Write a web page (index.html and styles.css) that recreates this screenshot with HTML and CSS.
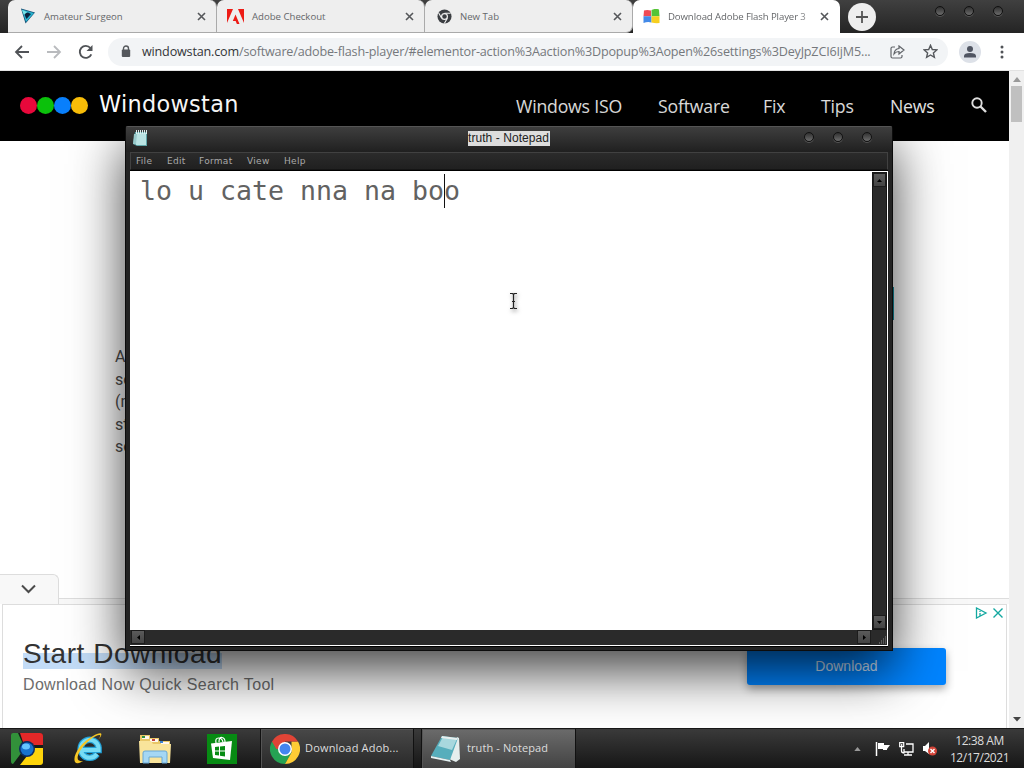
FILE: index.html
```html
<!DOCTYPE html>
<html lang="en">
<head>
<meta charset="utf-8">
<title>Desktop</title>
<link rel="stylesheet" href="styles.css">
</head>
<body>
<div class="desktop">
  <header class="tabs">
    <div class="tab t1">
      <svg width="16" height="16" viewBox="0 0 16 16"><path d="M1 .5 15 4.5 5.5 15.5z" fill="#124a70"/><path d="M1.800 1.500 14 5 6 14z" fill="#28b4cf"/><path d="M4 5.500 8 4.500 11 6 6.500 11z" fill="#08233f"/><path d="m2 2 5 2-3 3z" fill="#78e2e5"/></svg>
      <span class="label">Amateur Surgeon</span><svg class="x" width="9" height="9" viewBox="0 0 9 9"><path d="m1 1 7 7m0-7-7 7"/></svg>
    </div>
    <div class="tab t2">
      <svg width="17" height="15" viewBox="0 0 17 15"><path d="M0 0h6L0 14zm11 0h6v14zM8.500 5.500l4 9.500h-2.600l-1.300-3H5.800z" fill="#ed1c16"/></svg>
      <span class="label">Adobe Checkout</span><svg class="x" width="9" height="9" viewBox="0 0 9 9"><path d="m1 1 7 7m0-7-7 7"/></svg>
    </div>
    <div class="tab t3">
      <svg width="15" height="15" viewBox="0 0 16 16"><circle cx="8" cy="8" r="7.5" fill="#3b3e42"/><circle cx="8" cy="8" r="3.1" fill="#3b3e42" stroke="#eee" stroke-width="1.3"/><path d="M8 4.5h6.5M5 9.800 1.800 4.200M11 9.800 7.800 15.400" stroke="#eee" stroke-width="1.2"/></svg>
      <span class="label">New Tab</span><svg class="x" width="9" height="9" viewBox="0 0 9 9"><path d="m1 1 7 7m0-7-7 7"/></svg>
    </div>
    <div class="tab t4">
      <svg width="17" height="15" viewBox="0 0 17 15"><path d="M1 1.500q3-1 7 0v5.800H.500z" fill="#ef4b56"/><path d="M8.500 1q4-2 7.500-.5L16.500 7.300h-8z" fill="#54c436"/><path d="M.500 7.300h8v6.200q-4-1-8 .5z" fill="#438ae8"/><path d="M8.500 7.300h8V14q-4 .5-8-.500z" fill="#f6cf20"/></svg>
      <span class="label fade">Download Adobe Flash Player 3</span><svg class="x" width="9" height="9" viewBox="0 0 9 9"><path d="m1 1 7 7m0-7-7 7"/></svg>
    </div>
    <div class="plus"><svg width="14" height="14" viewBox="0 0 14 14"><path d="M7 1v12M1 7h12" stroke="#555" stroke-width="1.800"/></svg></div>
    <div class="knobs chrome-knobs"><i></i><i></i><i></i></div>
  </header>

  <div class="toolbar">
    <svg class="back" width="16" height="14" viewBox="0 0 16 14"><path d="M15 7H2m6-6L2 7l6 6" fill="none" stroke="#505357" stroke-width="1.800"/></svg>
    <svg class="fwd" width="16" height="14" viewBox="0 0 16 14"><path d="M1 7h13M8 1l6 6-6 6" fill="none" stroke="#b9bbbe" stroke-width="1.800"/></svg>
    <svg class="reload" width="16" height="16" viewBox="0 0 16 16"><path d="M13.300 10.300A6 6 0 1 1 12.400 4" fill="none" stroke="#505357" stroke-width="1.900"/><path d="M14.500 1v6h-6z" fill="#505357"/></svg>
    <div class="omni">
      <svg width="10" height="13" viewBox="0 0 10 13"><path d="M2.500 5V3.500a2.500 2.500 0 0 1 5 0V5" fill="none" stroke="#55585c" stroke-width="1.400"/><rect x=".8" y="4.500" width="8.400" height="7.500" rx="1" fill="#55585c"/></svg>
      <span class="url"><b>windowstan.com</b>/software/adobe-flash-player/#elementor-action%3Aaction%3Dpopup%3Aopen%26settings%3DeyJpZCI6IjM5...</span>
      <svg class="share" width="16" height="14" viewBox="0 0 16 14"><path d="M5 2H2.500Q1 2 1 3.500v8Q1 13 2.500 13h8q1.500 0 1.500-1.500V10M9 1l5 4-5 4V6.500Q6 6.500 4 9q.5-5 5-5.500z" fill="none" stroke="#606368" stroke-width="1.200"/></svg>
      <svg class="star" width="15" height="15" viewBox="0 0 15 15"><path d="m7.500 1.300 1.800 4.200 4.500.4-3.400 3 1 4.500-3.900-2.400-3.900 2.400 1-4.500-3.400-3 4.500-.4z" fill="none" stroke="#55585c" stroke-width="1.400"/></svg>
    </div>
    <div class="avatar"><svg width="14" height="14" viewBox="0 0 14 14"><circle cx="7" cy="4" r="3" fill="#505562"/><path d="M1 12.500V11q0-3 6-3t6 3v1.500z" fill="#505562"/></svg></div>
    <svg class="dots" width="4" height="14" viewBox="0 0 4 14"><circle cx="2" cy="2" r="1.500"/><circle cx="2" cy="7" r="1.500"/><circle cx="2" cy="12" r="1.500"/></svg>
  </div>

  <div class="view">
    <main class="page">
      <div class="site">
        <div class="balls"><i class="red"></i><i class="green"></i><i class="blue"></i><i class="gold"></i></div>
        <span class="brand">Windowstan</span>
        <nav><span class="n1">Windows ISO</span><span class="n2">Software</span><span class="n3">Fix</span><span class="n4">Tips</span><span class="n5">News</span></nav>
        <svg width="16" height="16" viewBox="0 0 16 16"><circle cx="6" cy="6" r="4.700" fill="none" stroke="#ddd" stroke-width="1.900"/><path d="m9.500 9.500 5.500 5.500" stroke="#ddd" stroke-width="2.400"/></svg>
      </div>
      <div class="article"><div class="teal"></div><p>A<br>so<br>(n<br>st<br>so</p></div>
      <div class="adtab"><div class="handle"><svg width="15" height="10" viewBox="0 0 15 10"><path d="m1 1.500 6.500 6.500L14 1.500" fill="none" stroke="#4b4b4b" stroke-width="2"/></svg></div><div class="rail"></div></div>
      <section class="ad">
        <div class="copy"><div><span class="start">Start Download</span></div><div class="quick">Download Now Quick Search Tool</div></div>
        <div class="cta">Download</div>
        <svg class="choice" width="28" height="12" viewBox="0 0 28 12"><path d="M1.500 1v10L11 6zM5 4v1m0 1v3" fill="none" stroke="#13a8a0" stroke-width="1.300"/><path d="m18.500 1.500 9 9m0-9-9 9" stroke="#13a8a0" stroke-width="1.400"/></svg>
      </section>
    </main>
    <div class="pagebar"><svg width="8" height="5"><path d="M0 5 4 0l4 5z" fill="#999"/></svg><div class="thumb"></div><svg class="down" width="8" height="5"><path d="m0 0 4 4.500L8 0z" fill="#444"/></svg></div>
  </div>

  <footer class="taskbar">
    <svg class="oldchrome" width="34" height="34" viewBox="0 0 34 34"><rect x="1" y="1" width="32" height="32" rx="3" fill="#151b18"/><path d="M1 3q0-2 2-2l5 0 4 9q-3 5 0 10L3 32q-2 0-2-3z" fill="#32913a"/><path d="M10 1h20q3 0 3 3v9H23q-3-5-10-3z" fill="#e32828"/><path d="M24 16h9v14q0 3-3 3H10l7-9q6 0 7-8z" fill="#fdd40b"/><circle cx="17" cy="17" r="8" fill="#0d2d62"/><circle cx="17" cy="17" r="6.500" fill="#1672cd"/><ellipse cx="16" cy="14.500" rx="4" ry="3" fill="#65c6ff"/></svg>
    <svg class="ie" width="34" height="34" viewBox="0 0 34 34"><path d="M25 22a9 9 0 1 1 1.600-6.200v2.300H10.500" fill="none" stroke="#22a0d6" stroke-width="6.500"/><path d="M25 22a9 9 0 1 1 1.600-6.200v2.300H10.500" fill="none" stroke="#77dcf5" stroke-width="4"/><path d="M26 8C33 0 28 0 21 4 9 10 0 24 3 30q2 3 8-1C5 30 4 26 8 19 14 9 25 2 28 3q1 1-2 5z" fill="#f6c624"/></svg>
    <svg class="explorer" width="34" height="32" viewBox="0 0 34 32"><path d="M2 5V2h10v3h9v3h11v22H2z" fill="#e9c768"/><path d="M4 3h7v3H4zm8 3h8v3h-8zm11 3h8v3h-8z" fill="#fff8ef"/><path d="M4 3h3v2H4z" fill="#31903e"/><path d="M14 6h3v2h-3z" fill="#c4443b"/><path d="M22 8h3v2h-3z" fill="#3a80ce"/><path d="M1 8h12l2 3h18l-1 19H2z" fill="#f9e49b"/><path d="M5 30V20q0-2 2-2h20q2 0 2 2v10h-5v-6H11v6z" fill="#a5d7f4" stroke="#68a8d5"/></svg>
    <svg class="store" width="30" height="30" viewBox="0 0 30 30"><path d="M0 0h30v30H0z" fill="#078b13"/><path d="M4 9.500 25 7l-2 19L6 24z" fill="#fff"/><path d="M9 9q-1-5 2.500-5T16 8M12 8q0-5 3-4.500T18 8" fill="none" stroke="#fff" stroke-width="1.200"/><path d="m8 13 4-.5v4H8zm5-.6 5-.5v4.600h-5zM8 17.500h4v4l-4-.5zm5 0h5v5l-5-.7z" fill="#078b13"/></svg>
    <div class="task chrome-task">
      <svg width="30" height="30" viewBox="0 0 30 30"><path d="M2 7.500A15 15 0 0 0 15 30l6.500-11.500L15 15z" fill="#25a353"/><path d="M28 7.500A15 15 0 0 1 15 30l6.500-11.500V7.500z" fill="#fecc35"/><path d="M2 7.500A15 15 0 0 1 28 7.500H15v7.500H6.300z" fill="#e04436"/><circle cx="15" cy="15" r="7" fill="#fff"/><circle cx="15" cy="15" r="5.500" fill="#4385ef"/></svg><span>Download Adob...</span>
    </div>
    <div class="task note-task">
      <svg width="32" height="30" viewBox="0 0 32 30"><path d="m27 3 2 1 1 21-4 3-7-3z" fill="#e5eeed"/><path d="M12 2 28 4 20 26 1 22z" fill="#56aebc"/><path d="m13 3 14 2-5 11L8 12z" fill="#a8d8de"/><path d="M12 2 28 4l-1 2-16-2z" fill="#e7eeee"/><path d="m1 22 19 4 1 2-20-4z" fill="#e4f2f3"/></svg><span>truth - Notepad</span>
    </div>
    <div class="tray">
      <svg class="up" width="7" height="4" viewBox="0 0 8 5"><path d="M0 5 4 0l4 5z" fill="#999"/></svg>
      <svg class="flag" width="15" height="15" viewBox="0 0 15 15"><path d="M1.500 1v14" stroke="#fff" stroke-width="1.500"/><path d="M3 2h6v2h6l-3 4v1H8V8H3z" fill="#fff"/></svg>
      <svg class="net" width="15" height="14" viewBox="0 0 15 14"><path d="M7 2h7v8H5V7m4 3v3m-4 0h8M2.500 5v4q0 2 3 2" fill="none" stroke="#fff" stroke-width="1.300"/><path d="M.7.700h4v4h-4zM2.700 2v2" fill="none" stroke="#fff" stroke-width="1.200"/></svg>
      <svg class="sound" width="16" height="15" viewBox="0 0 16 15"><path d="M1 5h2l4-4v12L3 10H1z" fill="#fff"/><circle cx="10.500" cy="10" r="4.500" fill="#d34438"/><path d="m8.500 8 4 4m0-4-4 4" stroke="#fff" stroke-width="1.400"/></svg>
      <div class="clock"><div>12:38 AM</div><div class="date">12/17/2021</div></div>
    </div>
  </footer>

  <div class="shade"><div class="shadow"></div></div>
  <div class="notepad">
    <div class="titlebar"><svg width="16" height="17" viewBox="0 0 16 17"><path d="M3 2h12v14H5L1 14z" fill="#5fa5a8"/><path d="M4 3h10v12H4z" fill="#b9e3e3"/><path d="M2 4 1 14h3L5 4z" fill="#98c9ca"/><path d="M4.500 0v4m2-4v4m2-4v4m2-4v4m2-4v4m2-4v4" stroke="#dceded"/></svg><span class="wintitle">truth - Notepad</span><div class="knobs"><i></i><i></i><i></i></div></div>
    <div class="menu"><span class="m1">File</span><span class="m2">Edit</span><span class="m3">Format</span><span class="m4">View</span><span class="m5">Help</span></div>
    <div class="client">
      <div class="paper">lo u cate nna na bo<span class="caret"></span>o</div>
      <div class="vbar"><div class="btn"><svg width="5" height="3"><path d="M0 3 2.500 0 5 3z"/></svg></div><div class="btn"><svg width="5" height="3"><path d="m0 0 2.500 3L5 0z"/></svg></div></div>
      <div class="hbar"><div class="btn"><svg width="3" height="5"><path d="M3 0 0 2.500 3 5z"/></svg></div><div class="btn"><svg width="3" height="5"><path d="m0 0 3 2.500L0 5z"/></svg></div></div>
      <div class="grip"><svg width="9" height="9"><path d="M7 1h1M5 3h1m1 0h1M3 5h1m1 0h1m1 0h1M1 7h1m1 0h1m1 0h1m1 0h1" stroke="#888"/></svg></div>
    </div>
  </div>
  <svg class="cursor" width="9" height="18" viewBox="0 0 9 18"><path d="M1 1.500h2.500l1 1 1-1H8M4.500 2v14M3 9.500h3M1 16.500h2.500l1-1 1 1H8" fill="none" stroke="#222" stroke-width="1.200"/></svg>
</div>
</body>
</html>
```

FILE: styles.css
```css
* { box-sizing: border-box; }
body { margin: 0; overflow: hidden; }
svg { display: block; flex: none; }
.desktop { position: relative; width: 1024px; height: 768px; overflow: hidden; display: flex; flex-direction: column; font-family: "Open Sans", sans-serif; background: #fff; }

.tabs { height: 33px; display: flex; padding-left: 8px; background: linear-gradient(#404040, #242424); flex: none; }
.tab { height: 33px; display: flex; align-items: center; background: #eee; border-radius: 7px 7px 0 0; border-bottom: 1px solid #aaa; font-size: 9.6px; color: #65676a; padding-right: 10px; white-space: nowrap; }
.t1 { width: 209px; padding-left: 12px; border-right: 1px solid #aaa; }
.t2 { width: 208px; padding-left: 10px; border-right: 1px solid #aaa; }
.t3 { width: 208px; padding-left: 12px; border-right: 1px solid #aaa; border-bottom-right-radius: 7px; }
.t4 { width: 207px; padding-left: 10px; padding-right: 11px; background: #fff; border-bottom: 0; }
.label { flex: 1; margin-left: 8px; letter-spacing: 0; }
.t4 .label { letter-spacing: -.1px; }
.fade { -webkit-mask-image: linear-gradient(90deg, #000 86%, #0003 97%); mask-image: linear-gradient(90deg, #000 86%, #0003 97%); }
.x { fill: none; stroke: #55575a; stroke-width: 1.6; }
.plus { width: 28px; height: 28px; margin: 3px 0 0 8px; border-radius: 50%; background: #eee; display: grid; place-items: center; }
.knobs { display: flex; }
.knobs i { width: 10px; height: 10px; border-radius: 50%; background: linear-gradient(#303030, #6c6c6c); border: 1.5px solid #111; box-shadow: 0 1px 0 #555; }
.chrome-knobs { gap: 19px; margin: 6px 0 0 59px; }

.toolbar { height: 38px; display: flex; align-items: center; padding-left: 14px; flex: none; border-bottom: 1px solid #e2e2e2; }
.fwd { margin-left: 16px; }
.reload { margin-left: 16px; }
.omni { width: 840px; height: 28px; margin-left: 14px; border-radius: 14px; background: #f2f4f6; display: flex; align-items: center; padding-left: 13px; flex: none; }
.url { width: 734px; margin-left: 11px; font-size: 12.6px; color: #75787c; white-space: nowrap; letter-spacing: -.18px; }
.url b { font-weight: 400; color: #323438; }
.share { margin-left: 14px; }
.star { margin-left: 17px; }
.avatar { width: 22px; height: 22px; border-radius: 50%; background: #dde1e8; display: grid; place-items: center; margin-left: 11px; }
.dots { margin-left: 19px; fill: #505357; }

.view { height: 657px; display: flex; flex: none; }
.page { width: 1009px; display: flex; flex-direction: column; }
.site { height: 70px; background: #000; display: flex; padding-left: 20px; flex: none; }
.balls { display: flex; margin-top: 26px; }
.balls i { width: 17px; height: 17px; border-radius: 50%; }
.red { background: #e8083b; } .green { background: #0bc10b; } .blue { background: #087ffc; } .gold { background: #f8bd08; }
.brand { width: 428px; padding: 19px 0 0 11px; font: 22.4px/28px "DejaVu Sans", sans-serif; letter-spacing: .3px; color: #fff; flex: none; }
nav { display: flex; margin-top: 23px; font-size: 17.7px; line-height: 25px; color: #e4e4e4; white-space: nowrap; width: 454px; flex: none; letter-spacing: -.2px; }
.n1 { width: 142px; } .n2 { width: 105px; } .n3 { width: 58px; } .n4 { width: 69px; }
.site > svg { margin-top: 26px; margin-left: 1px; }
.article { height: 433px; position: relative; }
.article p { margin: 0; padding: 205px 0 0 115px; font: 16px/22.5px Roboto, sans-serif; color: #4c4c4c; }
.teal { position: absolute; left: 840px; top: 146px; width: 54px; height: 33px; background: #1596a8; }
.adtab { height: 30px; display: flex; align-items: flex-end; background: #fff; }
.handle { width: 59px; height: 30px; background: #f8f8f8; border: 1px solid #ddd; border-left: 0; border-bottom: 0; border-radius: 0 6px 0 0; display: grid; place-items: center; padding: 0 2px 2px 0; }
.rail { flex: 1; height: 6px; background: #f8f8f8; border-top: 1px solid #ddd; }
.ad { height: 124px; margin: 0 2px; border: 1px solid #ddd; border-bottom: 0; display: flex; position: relative; background: #fff; }
.copy { padding: 32px 0 0 20px; width: 744px; font-family: "Liberation Sans", sans-serif; }
.start { font-size: 28px; line-height: 34px; letter-spacing: .55px; color: #333; background: linear-gradient(transparent 50%, #c3dcf7 50%); }
.quick { font-size: 16px; line-height: 22px; color: #6d6d6d; margin-top: 3px; letter-spacing: .33px; }
.cta { width: 199px; height: 37px; margin-top: 43px; border-radius: 3px; background: #0084ff; color: #d4e8ff; font: 14px/36px "Liberation Sans", sans-serif; text-align: center; box-shadow: 0 4px 9px #0005; }
.choice { position: absolute; right: 3px; top: 2px; }
.pagebar { width: 15px; background: #f0f0f0; padding: 6px 2px 0 4px; display: flex; flex-direction: column; }
.thumb { width: 11px; height: 36px; background: #c0c0c0; margin: 4px 0 0 -2px; }
.down { margin-top: auto; margin-bottom: 6px; }

.taskbar { height: 40px; flex: none; z-index: 4; background: linear-gradient(#3a3a3a, #161616); border-top: 1px solid #171717; display: flex; align-items: center; padding-left: 10px; color: #ddd; }
.ie { margin-left: 28px; } .explorer { margin-left: 32px; } .store { margin-left: 35px; }
.task { height: 39px; display: flex; align-items: center; border: 1px solid #111; border-width: 0 1px; box-shadow: inset 1px 1px #555; font-size: 11px; white-space: nowrap; }
.task span { margin: -2px 0 0 5px; }
.chrome-task { width: 154px; margin-left: 23px; padding-left: 9px; background: linear-gradient(#484848, #292929); }
.chrome-task span { letter-spacing: .18px; }
.note-task { width: 155px; margin-left: 7px; padding-left: 8px; background: linear-gradient(#6b6b6b, #434343); }
.note-task span { letter-spacing: .1px; }
.tray { display: flex; align-items: center; margin-left: 278px; }
.flag { margin-left: 14px; } .net { margin-left: 9px; } .sound { margin-left: 8px; }
.clock { width: 84px; text-align: center; font-size: 12px; line-height: 17px; letter-spacing: -.45px; color: #ddd; padding-right: 1px; }

.shade { position: absolute; left: 0; top: 71px; width: 1009px; height: 657px; overflow: hidden; }
.shadow { position: absolute; left: 125px; top: 55px; width: 768px; height: 525px; box-shadow: 0 20px 50px rgba(0,0,0,.75); }
.notepad { position: absolute; z-index: 5; left: 125px; top: 126px; width: 768px; height: 525px; background: #232323; border: 1px solid #0c0c0c; border-top-color: #555; border-radius: 3px 3px 0 0; padding: 0 4px; }
.titlebar { height: 25px; display: flex; background: linear-gradient(#3e3e3e, #202020); margin: 0 -4px; padding: 3px 20px 0 6px; }
.wintitle { width: 82px; height: 15px; margin: 1px 0 0 320px; background: #ddd; color: #222; font: 12px/15px "Liberation Sans", sans-serif; letter-spacing: .07px; white-space: nowrap; }
.titlebar .knobs { gap: 19px; margin: 2px 0 0 254px; }
.menu { height: 18px; border: 1px solid #414141; border-bottom-color: #151515; background: linear-gradient(#2b2b2b, #202020); font: 9px/16px "DejaVu Sans", sans-serif; color: #aaa; display: flex; padding-left: 5px; letter-spacing: .3px; }
.m1 { width: 31px; } .m2 { width: 32px; } .m3 { width: 48px; } .m4 { width: 37px; }
.client { width: 758px; height: 477px; border-top: 1px solid #000; display: grid; grid-template: 459px 15px / 742px 15px; background: #fff; border-bottom: 1px solid #000; }
.paper { padding: 3px 0 0 10px; color: #626262; font: 26.58px/34px "DejaVu Sans Mono", monospace; white-space: pre; }
.caret { display: inline-block; width: 1px; height: 34px; background: #111; margin: 0 -1px 0 0; vertical-align: top; }
.vbar, .hbar { background: #2a2a2a; display: flex; justify-content: space-between; }
.vbar { flex-direction: column; margin-top: 1px; border: 1px solid #161616; }
.hbar { padding: 0 1px; }
.btn { width: 14px; height: 14px; background: linear-gradient(#5b5b5b, #444); border: 1px solid #1c1c1c; display: grid; place-items: center; }
.vbar .btn { width: 13px; }
.grip { background: #2a2a2a; display: flex; align-items: end; justify-content: end; }
.cursor { position: absolute; z-index: 6; left: 509px; top: 292px; filter: drop-shadow(1px 2px 2px #0008); }
```
